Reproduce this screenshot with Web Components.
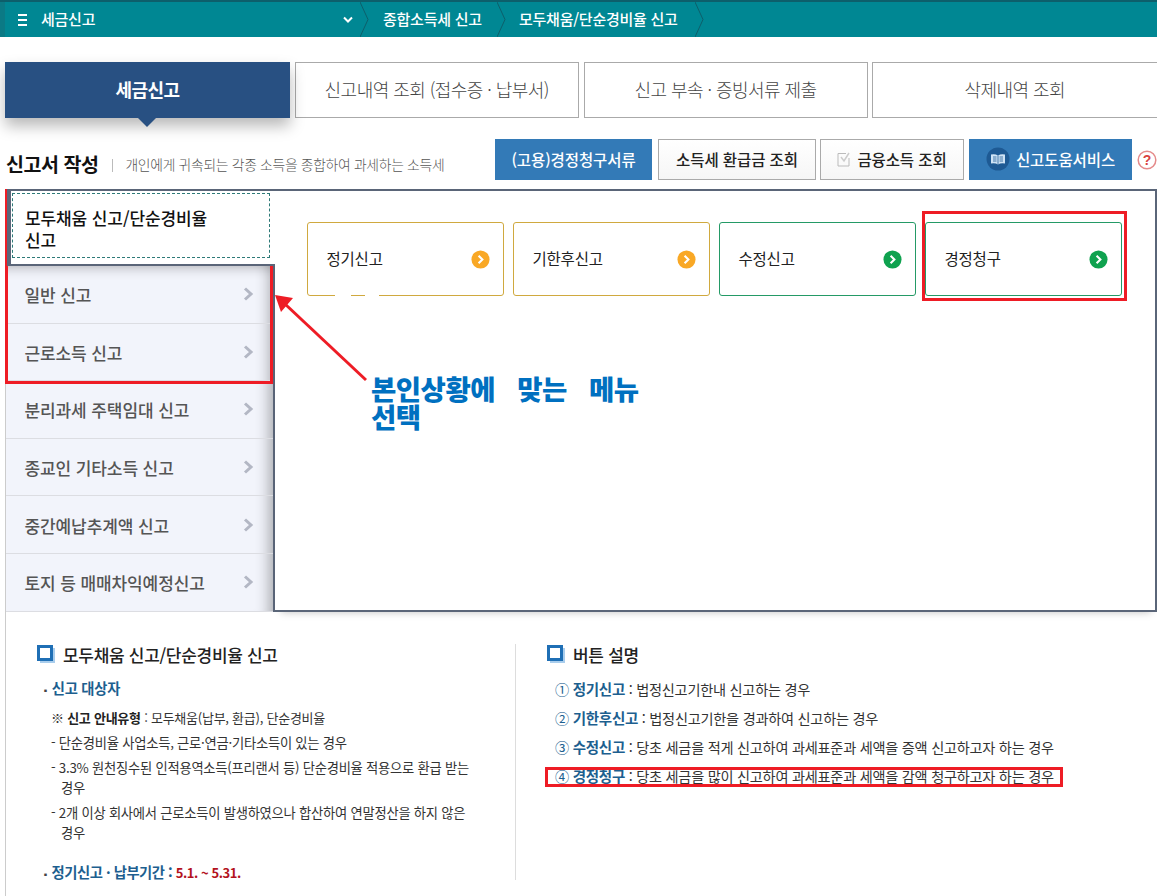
<!DOCTYPE html>
<html lang="ko">
<head>
<meta charset="utf-8">
<title>세금신고</title>
<style>
	html, body { margin: 0; background: #fff; }
	body {
		position: relative;
		width: 1157px;
		height: 896px;
		overflow: hidden;
		font-family: "Noto Sans CJK KR", "Noto Sans", sans-serif;
		color: #222;
	}
</style>
</head>
<body>
<tax-topbar></tax-topbar>
<tax-tabs></tax-tabs>
<tax-titlebar></tax-titlebar>
<tax-main></tax-main>
<tax-info></tax-info>
<tax-callouts></tax-callouts>

<script>
const SMALL_CHEVRON = `<svg viewBox="0 0 20 20" width="19" height="19"><circle cx="10" cy="10" r="9.5" fill="currentColor"/><path d="M8 6l4 4-4 4" fill="none" stroke="#fff" stroke-width="2.2"/></svg>`;

class TaxTopbar extends HTMLElement {
	connectedCallback() {
		let shadow = this.attachShadow({mode: "open"});
		shadow.innerHTML = `
			<style>
				:host {
					display: flex;
					align-items: center;
					height: 35px;
					background: #008793;
					border-top: 2px solid #0d5f6b;
					color: #fff;
					font-size: 15px;
					font-weight: 500;
					letter-spacing: -0.25px;
				}
				#menu {
					display: flex;
					align-items: center;
					width: 360px;
					height: 100%;
					box-sizing: border-box;
					padding-left: 13px;
					border-left: 5px solid #0b7a85;
				}
				#burger {
					width: 9px;
					height: 8px;
					margin-right: 14px;
					border-top: 2px solid #fff;
					border-bottom: 2px solid #fff;
				}
				#burger::after {
					content: "";
					display: block;
					height: 2px;
					margin-top: 3px;
					background: #fff;
				}
				#title { flex: 1; padding-bottom: 2px; }
				#down { margin-right: 6px; }
				.crumb {
					display: flex;
					align-items: center;
					box-sizing: border-box;
					height: 100%;
					padding-bottom: 2px;
				}
				.sep { flex: none; }
			</style>
			<div id="menu">
				<div id="burger"></div>
				<div id="title">세금신고</div>
				<svg id="down" width="12" height="8" viewBox="0 0 12 8"><path d="M2 1.5l4 4 4-4" fill="none" stroke="#fff" stroke-width="2"/></svg>
			</div>
			<svg class="sep" width="9" height="35" viewBox="0 0 9 35"><path d="M0 0l8 17.500-8 17.500" fill="none" stroke="#0d5f6b"/></svg>
			<div class="crumb" style="margin-left:14px;width:114px">종합소득세 신고</div>
			<svg class="sep" width="9" height="35" viewBox="0 0 9 35"><path d="M0 0l8 17.500-8 17.500" fill="none" stroke="#0d5f6b"/></svg>
			<div class="crumb" style="margin-left:13px;width:176px">모두채움/단순경비율 신고</div>
			<svg class="sep" width="9" height="35" viewBox="0 0 9 35"><path d="M0 0l8 17.500-8 17.500" fill="none" stroke="#0d5f6b"/></svg>
		`;
	}
}
customElements.define("tax-topbar", TaxTopbar);

class TaxTabs extends HTMLElement {
	connectedCallback() {
		let shadow = this.attachShadow({mode: "open"});
		shadow.innerHTML = `
			<style>
				:host {
					display: grid;
					grid-template-columns: 285px 284.500px 284px 285.500px;
					column-gap: 4.500px;
					height: 56px;
					margin: 25px 0 0 5px;
					font-size: 18px;
					letter-spacing: -0.55px;
				}
				div {
					display: flex;
					align-items: center;
					justify-content: center;
					box-sizing: border-box;
					padding-bottom: 2px;
					border: 1px solid #aaa;
					color: #444;
					font-weight: 300;
				}
				#active {
					position: relative;
					background: #285082;
					border: 0;
					color: #fff;
					font-weight: 700;
					box-shadow: 0 8px 14px rgba(0, 0, 0, 0.28);
				}
				#active::after {
					content: "";
					position: absolute;
					left: 133px;
					top: 56px;
					border-left: 9px solid transparent;
					border-right: 9px solid transparent;
					border-top: 9px solid #285082;
				}
			</style>
			<div id="active">세금신고</div>
			<div>신고내역 조회 (접수증 · 납부서)</div>
			<div>신고 부속 · 증빙서류 제출</div>
			<div>삭제내역 조회</div>
		`;
	}
}
customElements.define("tax-tabs", TaxTabs);

class TaxTitlebar extends HTMLElement {
	connectedCallback() {
		let shadow = this.attachShadow({mode: "open"});
		shadow.innerHTML = `
			<style>
				:host {
					display: flex;
					align-items: center;
					height: 41px;
					margin: 21px 0 9px 6px;
				}
				h2 {
					margin: 8px 0 0;
					font-size: 19.500px;
					font-weight: 700;
					letter-spacing: -0.45px;
					color: #111;
				}
				#desc {
					flex: 1;
					margin: 8px 0 0 14px;
					padding-left: 13px;
					font-size: 13.800px;
					font-weight: 300;
					letter-spacing: -0.3px;
					color: #555;
					position: relative;
				}
				#desc::before {
					content: "";
					position: absolute;
					left: 0;
					top: 5px;
					height: 13px;
					border-left: 1px solid #bbb;
				}
				.btn {
					display: flex;
					align-items: center;
					justify-content: center;
					box-sizing: border-box;
					height: 41px;
					padding-bottom: 1px;
					font-size: 15.500px;
					font-weight: 500;
					letter-spacing: -0.1px;
					margin-left: 5px;
				}
				.blue {
					background: #337ab7;
					color: #fff;
				}
				.plain {
					border: 1px solid #aaa;
					background: linear-gradient(#fff, #f6f6f6);
					color: #222;
				}
				svg { flex: none; }
				#help {
					margin: 0 0 0 5px;
					width: 20px;
				}
			</style>
			<h2>신고서 작성</h2>
			<div id="desc">개인에게 귀속되는 각종 소득을 종합하여 과세하는 소득세</div>
			<div class="btn blue" style="width:157px">(고용)경정청구서류</div>
			<div class="btn plain" style="width:158px;margin-left:6px">소득세 환급금 조회</div>
			<div class="btn plain" style="width:144px;margin-left:4px">
				<svg width="14" height="16" viewBox="0 0 14 16" style="margin-right:6px"><path d="M1 2.500h8M1 2.500v12.500h11v-8" fill="none" stroke="#bbb"/><path d="M4 6l3 4 5-8" fill="none" stroke="#ccc" stroke-width="1.500"/></svg>
				금융소득 조회
			</div>
			<div class="btn blue" style="width:163px">
				<svg width="24" height="24" viewBox="0 0 24 24" style="margin-right:6px"><circle cx="12" cy="12" r="11.500" fill="#1e5a94"/><path d="M5 7.500q4-1 7 1 3-2 7-1v9q-4-1-7 1-3-2-7-1z" fill="#cfe3f5"/><path d="M12 8.500v9M7 10h3.500M7 12h3.500M7 14h3.500M13.500 10h3.500M13.500 12h3.500M13.500 14h3.500" stroke="#1e5a94" stroke-width="0.800"/></svg>
				신고도움서비스
			</div>
			<svg id="help" width="20" height="20" viewBox="0 0 20 20"><circle cx="10" cy="10" r="8.800" fill="#fff" stroke="#e58a8a" stroke-width="1.500"/><text x="10" y="15" text-anchor="middle" font-size="14" font-weight="700" fill="#d9423f" font-family="Liberation Sans">?</text></svg>
		`;
	}
}
customElements.define("tax-titlebar", TaxTitlebar);

class TaxCard extends HTMLElement {
	connectedCallback() {
		let shadow = this.attachShadow({mode: "open"});
		let tone = this.getAttribute("tone");
		shadow.innerHTML = `
			<style>
				:host {
					display: flex;
					align-items: center;
					justify-content: space-between;
					box-sizing: border-box;
					width: 197px;
					height: 74px;
					padding: 0 13px 0 18.500px;
					border: 1px solid ${tone == "late" ? "#d0a93f" : "#249a66"};
					border-radius: 3px;
					color: ${tone == "late" ? "#f9a825" : "#0fa24f"};
					position: relative;
				}
				span {
					padding-bottom: 3px;
					color: #222;
					font-size: 15.500px;
					font-weight: 400;
					letter-spacing: -0.2px;
				}
				.gap {
					position: absolute;
					top: 71px;
					height: 3px;
					background: #fff;
				}
			</style>
			<span><slot></slot></span>
			${SMALL_CHEVRON}
			${this.hasAttribute("gaps") ? `<div class="gap" style="left:27px;width:16px"></div><div class="gap" style="left:57px;width:14px"></div>` : ""}
		`;
	}
}
customElements.define("tax-card", TaxCard);

class TaxMenuItem extends HTMLElement {
	connectedCallback() {
		let shadow = this.attachShadow({mode: "open"});
		shadow.innerHTML = `
			<style>
				:host {
					display: flex;
					align-items: center;
					justify-content: space-between;
					box-sizing: border-box;
					height: 57.600px;
					padding: 0 19px 0 18.500px;
					border-bottom: 1px solid #dcdde2;
					color: #555;
					font-size: 17px;
					font-weight: 500;
					letter-spacing: -0.1px;
				}
				span { padding-top: 1px; }
			</style>
			<span><slot></slot></span>
			<svg width="11" height="14" viewBox="0 0 11 14"><path d="M2 1.500l6 5.500-6 5.500" fill="none" stroke="#b3b7c4" stroke-width="3"/></svg>
		`;
	}
}
customElements.define("tax-menu-item", TaxMenuItem);

class TaxMain extends HTMLElement {
	connectedCallback() {
		let shadow = this.attachShadow({mode: "open"});
		shadow.innerHTML = `
			<style>
				:host {
					display: grid;
					grid-template-columns: 270px 1fr;
					height: 423px;
					margin-left: 5px;
				}
				#side {
					display: flex;
					flex-direction: column;
				}
				#current {
					box-sizing: border-box;
					height: 77px;
					margin-left: 2px;
					padding: 2px 5px 6px 1px;
					border-top: 2px solid #5a6578;
					border-left: 4px solid #5a6578;
					border-bottom: 2px solid #5a6578;
					background: #fff;
					position: relative;
					z-index: 1;
				}
				#current div {
					box-sizing: border-box;
					height: 100%;
					padding: 13px 50px 0 12px;
					border: 1px dashed #2e7a78;
					color: #111;
					font-size: 17px;
					font-weight: 500;
					line-height: 22px;
					letter-spacing: -0.1px;
				}
				#list {
					flex: 1;
					background: #f2f4fb;
					border-left: 1px solid #ccc;
					border-right: 2px solid #5a6578;
					box-shadow: inset -16px 0 14px -12px rgba(0, 0, 0, 0.3), inset 0 14px 12px -12px rgba(0, 0, 0, 0.25);
				}
				#panel {
					display: flex;
					gap: 9px;
					box-sizing: border-box;
					padding: 31px 0 0 32px;
					border-top: 2px solid #5a6578;
					border-right: 2px solid #5a6578;
					border-bottom: 2px solid #5a6578;
					box-shadow: 0 6px 8px -6px rgba(0, 0, 0, 0.25);
				}
			</style>
			<div id="side">
				<div id="current"><div>모두채움 신고/단순경비율 신고</div></div>
				<div id="list">
					<tax-menu-item>일반 신고</tax-menu-item>
					<tax-menu-item>근로소득 신고</tax-menu-item>
					<tax-menu-item>분리과세 주택임대 신고</tax-menu-item>
					<tax-menu-item>종교인 기타소득 신고</tax-menu-item>
					<tax-menu-item>중간예납추계액 신고</tax-menu-item>
					<tax-menu-item>토지 등 매매차익예정신고</tax-menu-item>
				</div>
			</div>
			<div id="panel">
				<tax-card tone="late" gaps>정기신고</tax-card>
				<tax-card tone="late">기한후신고</tax-card>
				<tax-card tone="fix">수정신고</tax-card>
				<tax-card tone="fix">경정청구</tax-card>
			</div>
		`;
	}
}
customElements.define("tax-main", TaxMain);

class TaxHeading extends HTMLElement {
	connectedCallback() {
		let shadow = this.attachShadow({mode: "open"});
		shadow.innerHTML = `
			<style>
				:host {
					display: flex;
					align-items: center;
					gap: 8px;
					height: 24px;
					padding-left: 1px;
					color: #222;
					font-size: 17px;
					font-weight: 500;
					letter-spacing: -0.3px;
				}
				svg { flex: none; }
			</style>
			<svg width="18" height="18" viewBox="0 0 18 18"><rect x="3" y="3" width="15" height="15" fill="#a9cdec"/><rect x="1.500" y="1.500" width="13" height="13" fill="#fff" stroke="#1f6fb5" stroke-width="3"/></svg>
			<slot></slot>
		`;
	}
}
customElements.define("tax-heading", TaxHeading);

class TaxInfo extends HTMLElement {
	connectedCallback() {
		let shadow = this.attachShadow({mode: "open"});
		shadow.innerHTML = `
			<style>
				:host {
					display: grid;
					grid-template-columns: 509px 1px 1fr;
					height: 284px;
					margin-left: 5px;
					border-left: 1px solid #ccc;
					font-size: 13.300px;
					font-weight: 400;
					letter-spacing: -0.25px;
					color: #333;
				}
				#left {
					box-sizing: border-box;
					padding: 30px 42px 0 30px;
				}
				#rule {
					height: 236px;
					margin-top: 32px;
					background: #ddd;
				}
				#right {
					padding: 30px 0 0 30px;
					font-size: 14.200px;
				}
				.sub {
					margin: 12px 0 0 5px;
					line-height: 20px;
					color: #1d5f8f;
					font-weight: 700;
					font-size: 14.300px;
				}
				.sub::before {
					content: "▪";
					margin-right: 2px;
					color: #444;
					font-size: 9px;
				}
				.note { margin: 7px 0 0 15px; line-height: 20px; font-size: 13px; }
				.note b { color: #222; font-weight: 700; }
				.dash {
					margin: 5px 0 0 15px;
					padding-left: 10px;
					text-indent: -10px;
					line-height: 20px;
				}
				.due { margin-top: 19px; letter-spacing: -0.45px; }
				.due em { font-style: normal; color: #b3121d; font-size: 13px; }
				ol {
					list-style: none;
					margin: 13px 0 0 9px;
					padding: 0;
				}
				li {
					height: 29px;
					line-height: 20px;
				}
				li i { font-style: normal; color: #1d5f8f; }
				li b { color: #1d5f8f; font-weight: 700; font-size: 14.500px; }
			</style>
			<div id="left">
				<tax-heading>모두채움 신고/단순경비율 신고</tax-heading>
				<div class="sub">신고 대상자</div>
				<div class="note">※ <b>신고 안내유형</b> : 모두채움(납부, 환급), 단순경비율</div>
				<div class="dash">- 단순경비율 사업소득, 근로·연금·기타소득이 있는 경우</div>
				<div class="dash">- 3.3% 원천징수된 인적용역소득(프리랜서 등) 단순경비율 적용으로 환급 받는 경우</div>
				<div class="dash">- 2개 이상 회사에서 근로소득이 발생하였으나 합산하여 연말정산을 하지 않은 경우</div>
				<div class="sub due">정기신고 · 납부기간 : <em>5.1. ~ 5.31.</em></div>
			</div>
			<div id="rule"></div>
			<div id="right">
				<tax-heading>버튼 설명</tax-heading>
				<ol>
					<li><i>①</i> <b>정기신고</b> : 법정신고기한내 신고하는 경우</li>
					<li><i>②</i> <b>기한후신고</b> : 법정신고기한을 경과하여 신고하는 경우</li>
					<li><i>③</i> <b>수정신고</b> : 당초 세금을 적게 신고하여 과세표준과 세액을 증액 신고하고자 하는 경우</li>
					<li><i>④</i> <b>경정청구</b> : 당초 세금을 많이 신고하여 과세표준과 세액을 감액 청구하고자 하는 경우</li>
				</ol>
			</div>
		`;
	}
}
customElements.define("tax-info", TaxInfo);

// red marks drawn over the screenshot
class TaxCallouts extends HTMLElement {
	connectedCallback() {
		let shadow = this.attachShadow({mode: "open"});
		shadow.innerHTML = `
			<style>
				:host {
					position: absolute;
					left: 0;
					top: 0;
					width: 1157px;
					height: 896px;
					pointer-events: none;
				}
				.box {
					position: absolute;
					box-sizing: border-box;
					border: 3px solid #ee1c25;
				}
				svg { position: absolute; left: 0; top: 0; }
				#note {
					position: absolute;
					left: 371px;
					top: 374px;
					color: #0070c0;
					font-size: 27.500px;
					font-weight: 900;
					line-height: 28px;
					letter-spacing: -0.5px;
					word-spacing: 15px;
					white-space: nowrap;
				}
			</style>
			<div class="box" style="left:5px;top:189px;width:268px;height:195px"></div>
			<div class="box" style="left:922px;top:211px;width:205px;height:90px"></div>
			<div class="box" style="left:545px;top:767px;width:518px;height:20px"></div>
			<svg width="1157" height="896" viewBox="0 0 1157 896">
				<path d="M366 380L285 304" stroke="#ee1c25" stroke-width="3"/>
				<path d="M275 295L293 298L281 312Z" fill="#ee1c25"/>
			</svg>
			<div id="note">본인상황에 맞는 메뉴<br>선택</div>
		`;
	}
}
customElements.define("tax-callouts", TaxCallouts);
</script>
</body>
</html>
